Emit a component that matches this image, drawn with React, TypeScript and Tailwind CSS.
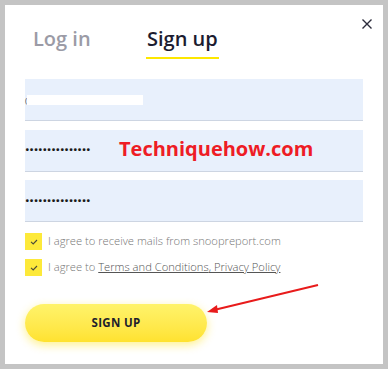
import React from 'react';

function Check() {
  return (
    <span className="w-[17px] h-[17px] shrink-0 bg-[#fde93a] flex items-center justify-center">
      <svg width="8" height="6" viewBox="0 0 8 6" fill="none">
        <path d="M1 2.8 L3.2 5 L7 1" stroke="#4a4a3a" strokeWidth="1.1" />
      </svg>
    </span>
  );
}

export default function App() {
  return (
    <div className="relative w-[388px] h-[369px] bg-[#c4c4c4] p-[5px] font-['Open_Sans',sans-serif]">
      <div className="relative w-full h-full bg-white px-[20px]">
        {/* close */}
        <svg className="absolute right-[11px] top-[14px]" width="10" height="10" viewBox="0 0 10 10" fill="none">
          <path d="M0.5 0.5 L9.5 9.5 M9.5 0.5 L0.5 9.5" stroke="#2b2b3b" strokeWidth="1.4" />
        </svg>

        {/* tabs */}
        <div className="flex pt-[20px] pl-[8px]">
          <div className="text-[20px] leading-[28px] font-semibold text-[#9b9ba6] w-[114px]">Log in</div>
          <div className="flex flex-col">
            <div className="text-[20px] leading-[28px] font-semibold text-[#1c1c30]">Sign up</div>
            <div className="h-[2px] bg-[#fde700] mt-[4px] -mx-[1px]"></div>
          </div>
        </div>

        {/* inputs */}
        <div className="mt-[20px] flex flex-col">
          <div className="h-[42px] bg-[#e8f0fc] border-b border-[#cdd5e2] flex items-center">
            <span className="text-[8px] text-[#555] leading-none">(</span>
            <span className="w-[116px] h-[10px] bg-white mt-[1px]"></span>
          </div>
          <div className="mt-[9px] h-[42px] bg-[#e8f0fc] border-b border-[#cdd5e2] flex items-center">
            <span className="text-[16px] leading-none font-bold text-[#1a1a1a] tracking-[-0.2px] -mt-[11px] w-[94px]">...............</span>
            <span className="text-[20px] leading-none font-bold text-[#ee1c25] mt-[-3px]">Techniquehow.com</span>
          </div>
          <div className="mt-[8px] h-[42px] bg-[#e8f0fc] border-b border-[#cdd5e2] flex items-center">
            <span className="text-[16px] leading-none font-bold text-[#1a1a1a] tracking-[-0.2px] -mt-[9px]">...............</span>
          </div>
        </div>

        {/* checkboxes */}
        <div className="mt-[11px] flex flex-col gap-[9px]">
          <label className="flex items-center gap-[6px] text-[11.2px] font-light text-[#777]">
            <Check />
            <span>I agree to receive mails from snoopreport.com</span>
          </label>
          <label className="flex items-center gap-[6px] text-[11.2px] font-light text-[#777]">
            <Check />
            <span>
              I agree to <span className="underline text-[#555]">Terms and Conditions</span>
              <span className="underline text-[#555]">, Privacy Policy</span>
            </span>
          </label>
        </div>

        {/* button */}
        <button className="mt-[28px] w-[182px] h-[38px] rounded-full bg-gradient-to-b from-[#fff36a] to-[#ffe22e] shadow-[0_3px_10px_rgba(255,225,0,0.45)] text-[11.5px] font-bold tracking-[0.3px] text-[#1e1e2c]">
          SIGN UP
        </button>
      </div>

      {/* annotation arrow */}
      <svg className="absolute left-0 top-0 pointer-events-none" width="388" height="369" viewBox="0 0 388 369">
        <line x1="318" y1="285" x2="214" y2="310" stroke="#e81b1b" strokeWidth="2" />
        <path d="M207 312 L217 305 L218 313 Z" fill="#e81b1b" />
      </svg>
    </div>
  );
}
